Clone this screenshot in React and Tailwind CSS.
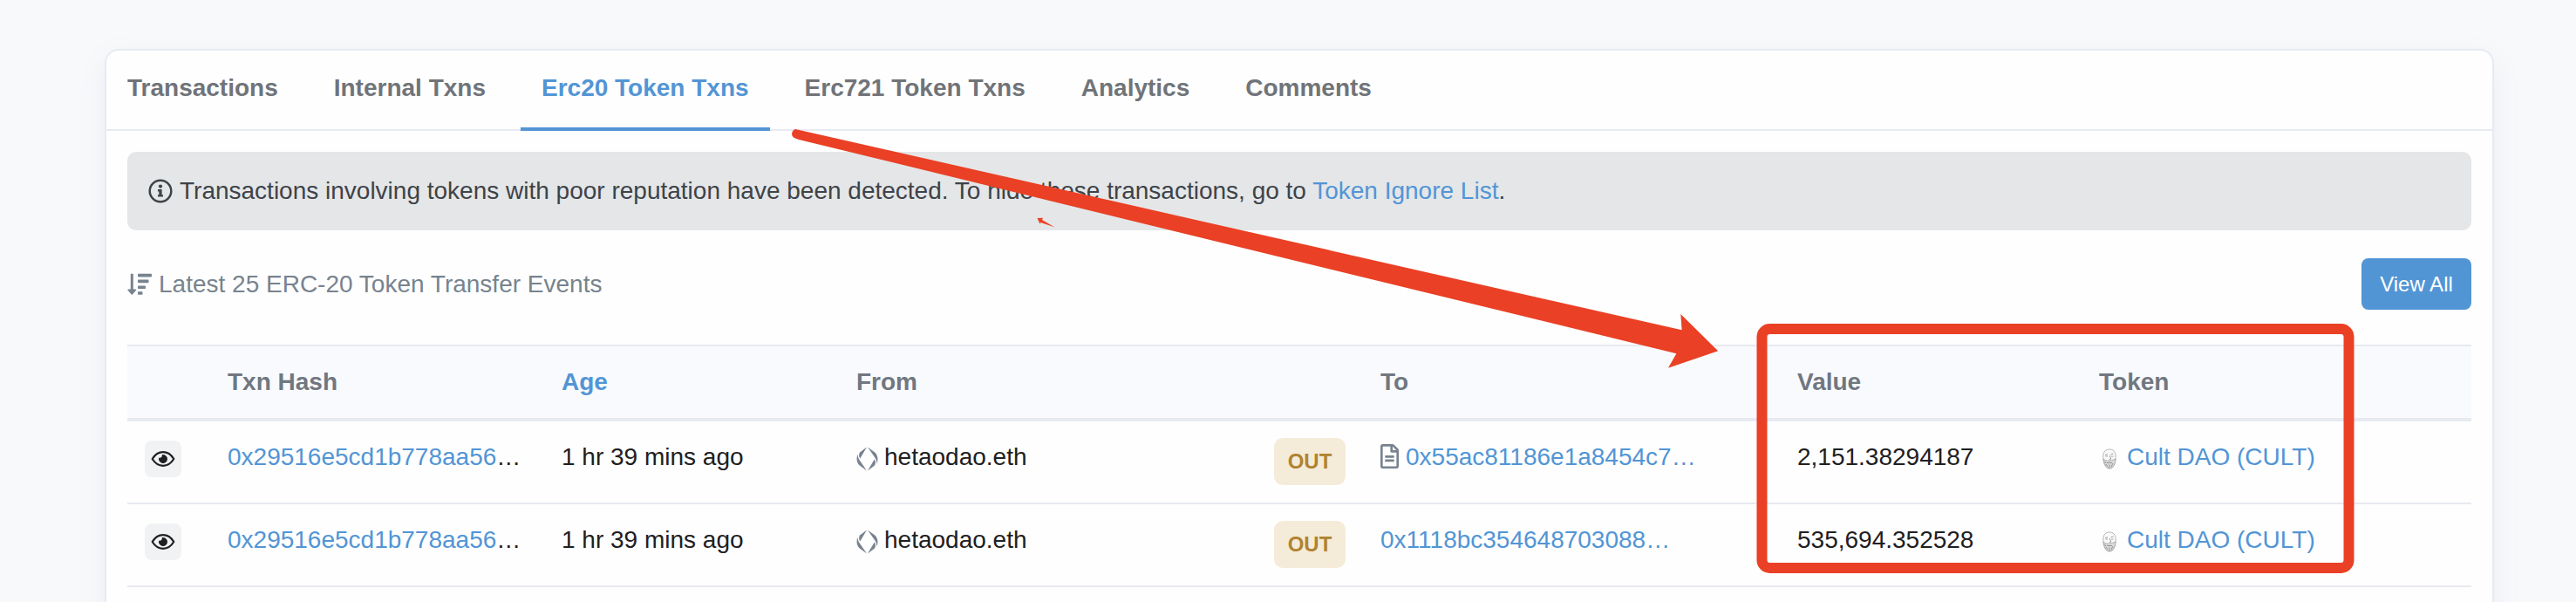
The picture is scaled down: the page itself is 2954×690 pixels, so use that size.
import React from "react";
import { FaRegFileAlt } from "react-icons/fa";

const tabs = [
  "Transactions",
  "Internal Txns",
  "Erc20 Token Txns",
  "Erc721 Token Txns",
  "Analytics",
  "Comments",
];

const rows = [
  {
    hash: "0x29516e5cd1b778aa56",
    age: "1 hr 39 mins ago",
    from: "hetaodao.eth",
    to: "0x55ac81186e1a8454c7…",
    contract: true,
    value: "2,151.38294187",
    token: "Cult DAO (CULT)",
  },
  {
    hash: "0x29516e5cd1b778aa56",
    age: "1 hr 39 mins ago",
    from: "hetaodao.eth",
    to: "0x1118bc354648703088…",
    contract: false,
    value: "535,694.352528",
    token: "Cult DAO (CULT)",
  },
];

const InfoIcon = () => (
  <svg className="w-7 h-7 shrink-0" viewBox="0 0 28 28" fill="none">
    <circle cx="14" cy="14" r="12.3" stroke="#3e4348" strokeWidth="2.5" />
    <circle cx="14" cy="8.6" r="2.1" fill="#3e4348" />
    <path d="M11 12h4.600v6.200H17v2.400h-6v-2.400h1.300v-3.800H11z" fill="#3e4348" />
  </svg>
);

const SortIcon = () => (
  <svg className="w-7 h-[26px] shrink-0" viewBox="0 0 28 26" fill="#77838f">
    <path d="M3.800.8h3V18.500h2.700c.7 0 1 .8.500 1.300L5.900 24.500c-.3.4-.9.4-1.200 0L.600 19.800C.1 19.300.400 18.500 1.100 18.500h2.700z" />
    <rect x="12" y="0.800" width="16" height="3.600" rx="0.800" />
    <rect x="12" y="7.600" width="12.500" height="3.600" rx="0.800" />
    <rect x="12" y="14.400" width="9" height="3.600" rx="0.800" />
    <rect x="12" y="21.200" width="5.500" height="3.600" rx="0.800" />
  </svg>
);

const EyeIcon = () => (
  <svg className="w-7 h-5" viewBox="0 0 28 20" fill="none">
    <path
      d="M1.700 10C4.800 5 9 2.200 14 2.200S23.200 5 26.300 10C23.200 15 19 17.800 14 17.800S4.800 15 1.700 10Z"
      stroke="#1e2022"
      strokeWidth="2.200"
      strokeLinejoin="round"
    />
    <path
      d="M14 5a5 5 0 1 1-4.800 3.600 2.600 2.600 0 0 0 3.500-3.300c.4-.2.9-.3 1.300-.3Z"
      fill="#1e2022"
    />
  </svg>
);

const EnsIcon = () => (
  <svg className="w-[25px] h-7 shrink-0" viewBox="0 0 25 28" fill="#77838f">
    <path d="M12 .5 4.300 13.600C2.700 11.500 2.600 8.300 4.300 6.300Z" />
    <path d="M1.600 8.500C-.4 13.500.4 18.500 3.800 21.600L12 27.500 3 14.500C1.900 12.500 1.500 10.500 1.600 8.500Z" />
    <path d="M13 27.500 20.700 14.400C22.300 16.500 22.400 19.700 20.700 21.700Z" />
    <path d="M23.400 19.500C25.400 14.500 24.600 9.500 21.200 6.400L13 .5 22 13.500C23.100 15.500 23.500 17.500 23.400 19.500Z" />
  </svg>
);

const FaceIcon = () => (
  <svg
    className="w-4 h-6 shrink-0"
    viewBox="0 0 16 24"
    fill="none"
    stroke="#9a9a9a"
    strokeWidth="0.700"
  >
    <path d="M.800 9C.800 3.500 4 1 8 1s7.200 2.500 7.200 8-1.700 14-7.200 14S.800 14.500.800 9Z" fill="#fafafa" />
    <path d="M3 7.500l3-.8M9.500 6.700l3-.8M3.500 9h2.500M10 9h2.500M8 8l1.800 4-2.200.6" stroke="#777" />
    <path d="M1 12c2 1.500 3.500 2.500 7 2S13 12.500 15 12c0 5-2.500 10.500-7 11C4 22.500 1.500 17 1 12Z" fill="#dadada" />
    <path d="M5 16.500h6M4 18l2 2.500M8 18.500v3.500M12 17l-2 4M2.500 15l1.500 2" stroke="#777" />
  </svg>
);

const Tabs = () => (
  <ul className="flex h-[92px] items-stretch gap-4 border-b-2 border-[#e7eaf3]">
    {tabs.map((tab) => (
      <li
        key={tab}
        className={
          tab === "Erc20 Token Txns"
            ? "-mb-0.5 border-b-4 border-[#5295d5] px-6 pt-[25px] font-bold text-[#5295d5]"
            : "px-6 pt-[25px] font-bold text-[#707479]"
        }
      >
        {tab}
      </li>
    ))}
  </ul>
);

const Row = ({ row, last }) => (
  <tr className={last ? "h-[95px] border-b-2 border-[#e7eaf0]" : "h-24 border-b-2 border-[#e7eaf0]"}>
    <td className="pl-5 pt-[22px]">
      <div className="flex h-[42px] w-[42px] items-center justify-center rounded-lg bg-[#f1f2f4]">
        <EyeIcon />
      </div>
    </td>
    <td className="pt-[23px]">
      <a className="text-[#5295d5]">{row.hash}</a>…
    </td>
    <td className="pt-[23px]">{row.age}</td>
    <td className="pt-[23px]">
      <div className="flex items-center gap-[7px]">
        <span className="pt-1">
          <EnsIcon />
        </span>
        {row.from}
      </div>
    </td>
    <td className="pt-[19px]">
      <div className="flex h-[54px] w-[82px] items-center justify-center rounded-[10px] bg-[#f5ebd9] text-2xl font-bold text-[#b08330]">
        OUT
      </div>
    </td>
    <td className="pt-[23px]">
      <div className="flex items-center gap-2 text-[#5295d5]">
        {row.contract && <FaRegFileAlt className="-mt-0.5 h-7 w-[21px] text-[#77838f]" />}
        {row.to}
      </div>
    </td>
    <td className="pt-[23px]">{row.value}</td>
    <td className="pt-[23px]">
      <div className="flex items-center gap-3 pl-1 text-[#5295d5]">
        <span className="pt-1">
          <FaceIcon />
        </span>
        {row.token}
      </div>
    </td>
  </tr>
);

const Annotations = () => (
  <svg
    className="pointer-events-none absolute left-0 top-0 h-[690px] w-[2954px]"
    viewBox="0 0 2954 690"
    fill="#ea4025"
  >
    <path d="M912 148 1928.600 378.300 1927.300 360 1970.200 402.300 1913 421.700 1922.400 405.300 916 160Q908 158 908 153.500 908.500 149 912 148Z" />
    <path d="M1189.500 250 1196 249.800 1195 252 1209.500 260.500 1193.500 255 1192.500 256.500Z" />
    <rect x="2020.500" y="377" width="673" height="274" rx="9" fill="none" stroke="#ea4025" strokeWidth="12" />
  </svg>
);

const App = () => {
  return (
    <div className="relative h-[690px] w-[2954px] overflow-hidden bg-[#f8f9fb] pl-[120px] pt-14 font-['Liberation_Sans',Arial,sans-serif] text-[28px] leading-[36px] text-[#1e2022]">
      <div className="h-[800px] w-[2740px] rounded-2xl border-2 border-[#e7eaf3] bg-[#fefefe] shadow-[0_12px_30px_rgba(140,152,164,0.12)]">
        <Tabs />
        <div className="px-6 pt-6">
          <div className="flex h-[90px] items-center gap-2 rounded-[10px] bg-[#e4e6e8] pl-6 text-[#3e4348]">
            <InfoIcon />
            <p>
              Transactions involving tokens with poor reputation have been detected. To hide these
              transactions, go to <a className="text-[#5295d5]">Token Ignore List</a>.
            </p>
          </div>

          <div className="mt-8 flex h-[59px] items-center justify-between">
            <p className="flex items-center gap-2 text-[#77838f]">
              <SortIcon />
              Latest 25 ERC-20 Token Transfer Events
            </p>
            <button className="h-[59px] w-[126px] rounded-lg bg-[#5295d5] text-2xl text-white">
              View All
            </button>
          </div>

          <table className="mt-10 w-full table-fixed border-collapse text-left [&_td]:align-top">
            <colgroup>
              <col className="w-[115px]" />
              <col className="w-[383px]" />
              <col className="w-[338px]" />
              <col className="w-[479px]" />
              <col className="w-[122px]" />
              <col className="w-[478px]" />
              <col className="w-[346px]" />
              <col />
            </colgroup>
            <thead>
              <tr className="h-[85px] border-b-4 border-t-2 border-[#e7eaf0] bg-[#f9fafe] text-[#707780]">
                <th></th>
                <th>Txn Hash</th>
                <th className="text-[#5295d5]">Age</th>
                <th>From</th>
                <th></th>
                <th>To</th>
                <th>Value</th>
                <th>Token</th>
              </tr>
            </thead>
            <tbody>
              {rows.map((row, i) => (
                <Row key={i} row={row} last={i === rows.length - 1} />
              ))}
            </tbody>
          </table>
        </div>
      </div>
      <Annotations />
    </div>
  );
};

export default App;
